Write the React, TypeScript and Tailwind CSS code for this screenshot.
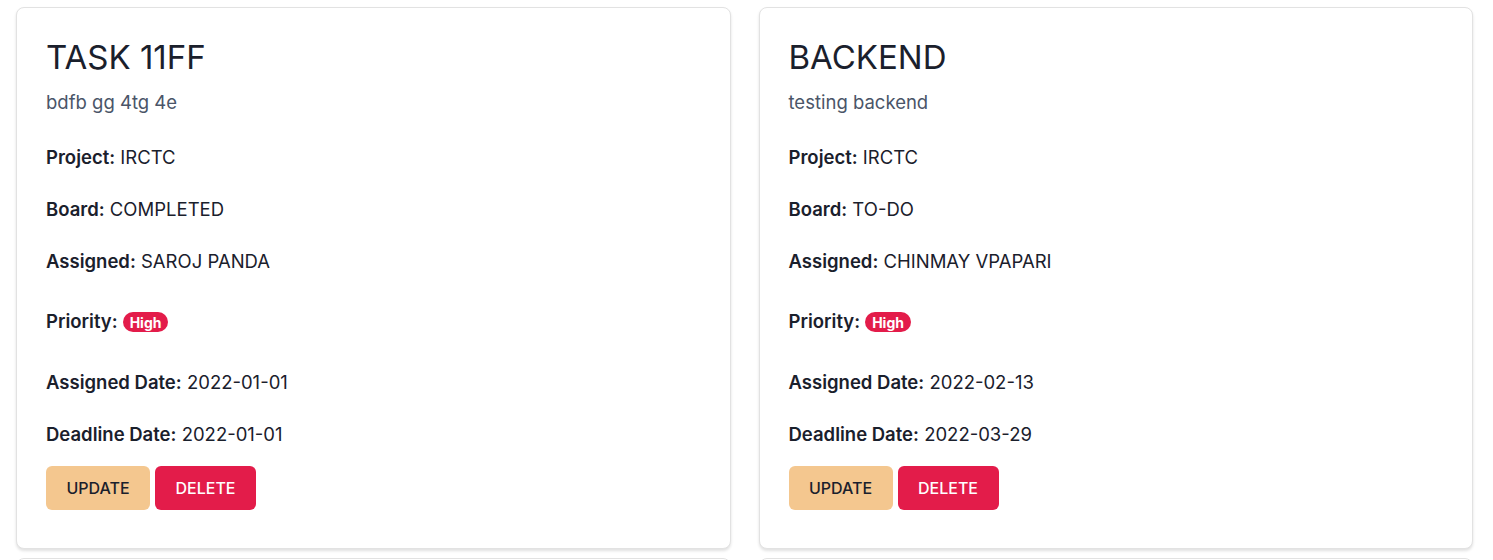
import React from 'react';

interface Task {
  title: string;
  description: string;
  project: string;
  board: string;
  assigned: string;
  priority: string;
  assignedDate: string;
  deadlineDate: string;
}

const tasks: Task[] = [
  {
    title: 'TASK 11FF',
    description: 'bdfb gg 4tg 4e',
    project: 'IRCTC',
    board: 'COMPLETED',
    assigned: 'SAROJ PANDA',
    priority: 'High',
    assignedDate: '2022-01-01',
    deadlineDate: '2022-01-01',
  },
  {
    title: 'BACKEND',
    description: 'testing backend',
    project: 'IRCTC',
    board: 'TO-DO',
    assigned: 'CHINMAY VPAPARI',
    priority: 'High',
    assignedDate: '2022-02-13',
    deadlineDate: '2022-03-29',
  },
];

function Field({ label, value, className = '' }: { label: string; value: string; className?: string }) {
  return (
    <p className={`text-[18.5px] leading-6 text-[#1a202c] ${className}`}>
      <span className="font-semibold">{label}:</span> {value}
    </p>
  );
}

function TaskCard({ task }: { task: Task }) {
  return (
    <div className="bg-white border border-[#e2e2e2] rounded-lg shadow-[0_2px_3px_rgba(0,0,0,0.12)] px-[29px] pt-[29px] pb-[38px]">
      <h2 className="text-[33px] leading-10 text-[#1a202c]">{task.title}</h2>
      <p className="mt-[13px] text-[18.5px] leading-6 text-[#4a5568]">{task.description}</p>
      <Field label="Project" value={task.project} className="mt-[31px]" />
      <Field label="Board" value={task.board} className="mt-[28px]" />
      <Field label="Assigned" value={task.assigned} className="mt-[28px]" />
      <div className="mt-[37px] flex items-center h-6 text-[18.5px] text-[#1a202c]">
        <span className="font-semibold">Priority:</span>
        <span className="ml-[5px] inline-flex items-center h-5 px-[7px] rounded-full bg-[#e31c4a] text-white text-[14px] font-bold">
          {task.priority}
        </span>
      </div>
      <Field label="Assigned Date" value={task.assignedDate} className="mt-[36px]" />
      <Field label="Deadline Date" value={task.deadlineDate} className="mt-[28px]" />
      <div className="mt-[20px] flex gap-[5px]">
        <button className="h-[44px] w-[104px] rounded-md bg-[#f4c78f] text-[#1a202c] text-[16px] font-medium">
          UPDATE
        </button>
        <button className="h-[44px] w-[101px] rounded-md bg-[#e31c4a] text-white text-[16px] font-medium">
          DELETE
        </button>
      </div>
    </div>
  );
}

function EmptyCard() {
  return <div className="h-[40px] bg-white border border-[#e2e2e2] rounded-lg" />;
}

export default function App() {
  return (
    <div className="h-[560px] overflow-hidden bg-white font-['Inter',sans-serif] pl-[16px] pr-[20px] pt-[7px]">
      <div className="grid grid-cols-2 gap-x-[28px] gap-y-[9px]">
        {tasks.map((t, i) => (
          <TaskCard key={i} task={t} />
        ))}
        <EmptyCard />
        <EmptyCard />
      </div>
    </div>
  );
}
